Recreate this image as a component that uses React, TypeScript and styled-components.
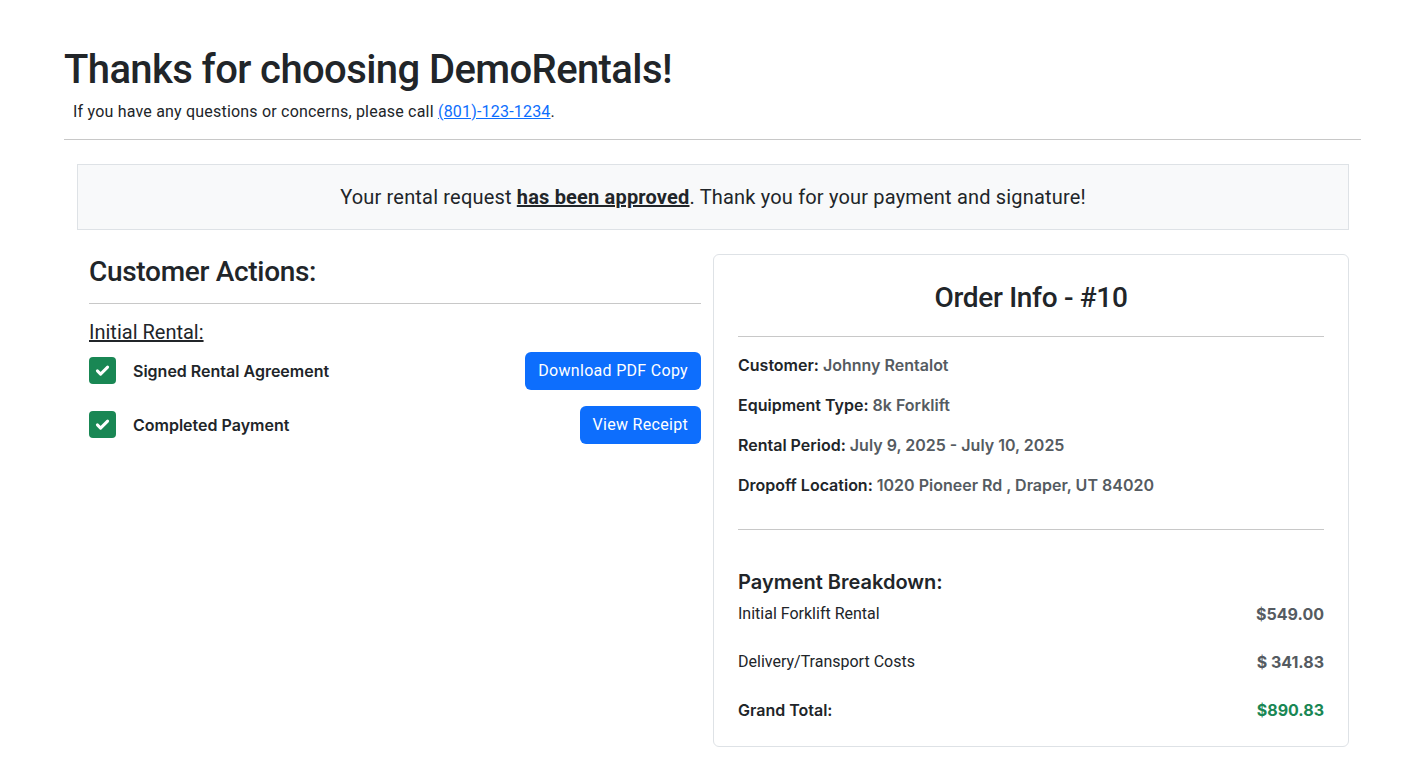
import React from "react";
import styled, { createGlobalStyle } from "styled-components";

const Global = createGlobalStyle`
  html, body { margin: 0; padding: 0; background: #fff; }
  body {
    font-family: Roboto, "Liberation Sans", Arial, sans-serif;
    color: #212529;
    font-size: 16px;
    line-height: 1.5;
  }
  * { box-sizing: border-box; }
`;

const boldFont = `Inter, "Liberation Sans", Arial, sans-serif`;

const Page = styled.div`
  padding: 46px 61px 18px 64px;
`;

const Title = styled.h1`
  margin: 0;
  font-size: 40px;
  font-weight: 500;
  line-height: 1.2;
  letter-spacing: -0.6px;
`;

const Sub = styled.p`
  margin: 6px 0 0 9px;
  font-size: 16px;
  letter-spacing: 0.2px;
`;

const Link = styled.a`
  color: #0d6efd;
  text-decoration: underline;
`;

const Rule = styled.hr<{ $mt?: number; $mb?: number }>`
  border: 0;
  border-top: 1px solid #c8c8c8;
  margin: ${(p) => p.$mt ?? 16}px 0 ${(p) => p.$mb ?? 16}px;
`;

const Main = styled.div`
  padding: 0 12px 0 13px;
`;

const Alert = styled.div`
  background: #f8f9fa;
  border: 1px solid #dee2e6;
  margin-top: 24px;
  height: 66px;
  display: flex;
  align-items: center;
  justify-content: center;
  font-size: 20px;
  letter-spacing: 0.18px;
`;

const Strong = styled.strong`
  font-weight: 700;
  text-decoration: underline;
`;

const Columns = styled.div`
  display: grid;
  grid-template-columns: 1fr 1fr;
  margin-top: 24px;
  align-items: start;
`;

const Left = styled.div`
  padding: 0 12px;
`;

const SectionTitle = styled.h3`
  margin: 0;
  padding-top: 1px;
  font-size: 28px;
  font-weight: 500;
  line-height: 1.2;
  letter-spacing: -0.3px;
`;

const Subhead = styled.div`
  font-size: 20px;
  text-decoration: underline;
  line-height: 1.2;
  margin-bottom: 8px;
`;

const ActionRow = styled.div`
  display: flex;
  align-items: center;
  justify-content: space-between;
  margin-bottom: 16px;
`;

const Check = styled.span`
  width: 27px;
  height: 27px;
  border-radius: 4px;
  background: #198754;
  display: inline-flex;
  align-items: center;
  justify-content: center;
  margin-right: 17px;
  flex: none;
`;

const ActionLabel = styled.div`
  display: flex;
  align-items: center;
  font-family: ${boldFont};
  font-weight: 600;
  font-size: 16px;
`;

const Button = styled.button`
  background: #0d6efd;
  color: #fff;
  border: 0;
  border-radius: 6px;
  height: 38px;
  padding: 0 13px;
  font-family: inherit;
  font-size: 16px;
  letter-spacing: 0.3px;
  cursor: pointer;
`;

const Card = styled.div`
  border: 1px solid #dee2e6;
  border-radius: 6px;
  padding: 24px 24px 24px;
`;

const CardTitle = styled.h3`
  margin: 0;
  text-align: center;
  font-size: 28px;
  font-weight: 500;
  line-height: 1.2;
  padding-top: 2px;
  letter-spacing: -0.3px;
`;

const InfoLine = styled.div`
  font-family: ${boldFont};
  font-weight: 600;
  margin-bottom: 16px;
`;

const InfoValue = styled.span`
  color: #555b61;
`;

const BreakHead = styled.h5`
  margin: 40px 0 8px;
  font-family: ${boldFont};
  font-size: 20px;
  font-weight: 600;
  line-height: 1.2;
`;

const PriceRow = styled.div<{ $total?: boolean }>`
  display: flex;
  justify-content: space-between;
  font-family: ${(p) => (p.$total ? boldFont : "inherit")};
  font-weight: ${(p) => (p.$total ? 600 : 400)};
  margin-bottom: 24px;
  &:last-child { margin-bottom: 0; }
`;

const Price = styled.span<{ $green?: boolean }>`
  font-family: ${boldFont};
  font-weight: 700;
  color: ${(p) => (p.$green ? "#198754" : "#555b61")};
`;

const CheckIcon = () => (
  <svg width="17" height="17" viewBox="0 0 16 16" fill="none">
    <path d="M3.2 8.4l3 3L12.8 4.8" stroke="#fff" strokeWidth="2.8" strokeLinecap="round" strokeLinejoin="round" />
  </svg>
);

export default function App() {
  return (
    <>
      <Global />
      <Page>
        <Title>Thanks for choosing DemoRentals!</Title>
        <Sub>
          If you have any questions or concerns, please call <Link href="#">(801)-123-1234</Link>.
        </Sub>
        <Rule $mt={15} $mb={0} />
        <Main>
          <Alert>
            <span>
              Your rental request <Strong>has been approved</Strong>. Thank you for your payment and signature!
            </span>
          </Alert>
          <Columns>
            <Left>
              <SectionTitle>Customer Actions:</SectionTitle>
              <Rule $mt={14} $mb={16} />
              <Subhead>Initial Rental:</Subhead>
              <ActionRow>
                <ActionLabel>
                  <Check><CheckIcon /></Check>
                  Signed Rental Agreement
                </ActionLabel>
                <Button>Download PDF Copy</Button>
              </ActionRow>
              <ActionRow>
                <ActionLabel>
                  <Check><CheckIcon /></Check>
                  Completed Payment
                </ActionLabel>
                <Button>View Receipt</Button>
              </ActionRow>
            </Left>
            <Card>
              <CardTitle>Order Info - #10</CardTitle>
              <Rule $mt={21} $mb={16} />
              <InfoLine>Customer: <InfoValue>Johnny Rentalot</InfoValue></InfoLine>
              <InfoLine>Equipment Type: <InfoValue>8k Forklift</InfoValue></InfoLine>
              <InfoLine>Rental Period: <InfoValue>July 9, 2025 - July 10, 2025</InfoValue></InfoLine>
              <InfoLine>Dropoff Location: <InfoValue>1020 Pioneer Rd , Draper, UT 84020</InfoValue></InfoLine>
              <Rule $mt={32} $mb={0} />
              <BreakHead>Payment Breakdown:</BreakHead>
              <PriceRow><span>Initial Forklift Rental</span><Price>$549.00</Price></PriceRow>
              <PriceRow><span>Delivery/Transport Costs</span><Price>$ 341.83</Price></PriceRow>
              <PriceRow $total><span>Grand Total:</span><Price $green>$890.83</Price></PriceRow>
            </Card>
          </Columns>
        </Main>
      </Page>
    </>
  );
}
